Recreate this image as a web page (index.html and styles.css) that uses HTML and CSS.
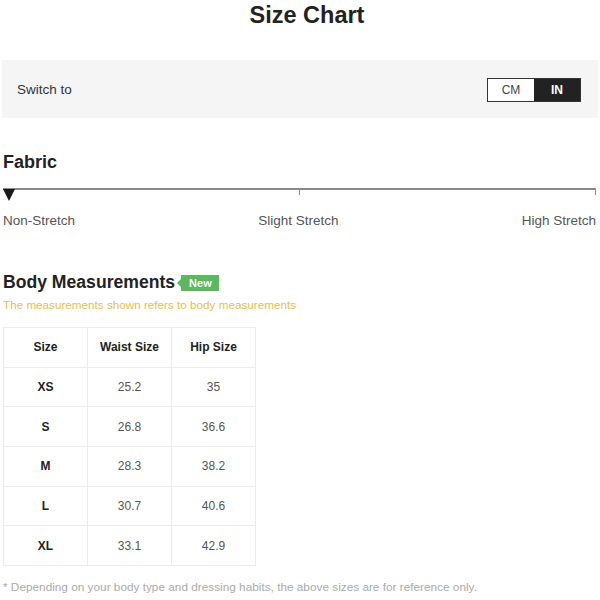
FILE: index.html
```html
<!DOCTYPE html>
<html>
<head>
<meta charset="utf-8">
<link rel="stylesheet" href="styles.css">
</head>
<body>
<div class="page">
  <h1 class="title">Size Chart</h1>
  <div class="switch-bar">
    <span class="switch-label">Switch to</span>
    <div class="toggle">
      <span class="opt">CM</span>
      <span class="opt active">IN</span>
    </div>
  </div>

  <h2 class="section-title fabric-title">Fabric</h2>
  <div class="slider">
    <div class="track">
      <span class="tick mid"></span>
      <span class="tick end"></span>
      <span class="marker"></span>
    </div>
    <div class="slider-labels">
      <span>Non-Stretch</span>
      <span>Slight Stretch</span>
      <span>High Stretch</span>
    </div>
  </div>

  <div class="body-head">
    <h2 class="section-title">Body Measurements</h2>
    <span class="badge">New</span>
  </div>
  <p class="note">The measurements shown refers to body measurements</p>

  <table class="chart">
    <thead>
      <tr><th>Size</th><th>Waist Size</th><th>Hip Size</th></tr>
    </thead>
    <tbody>
      <tr><th>XS</th><td>25.2</td><td>35</td></tr>
      <tr><th>S</th><td>26.8</td><td>36.6</td></tr>
      <tr><th>M</th><td>28.3</td><td>38.2</td></tr>
      <tr><th>L</th><td>30.7</td><td>40.6</td></tr>
      <tr><th>XL</th><td>33.1</td><td>42.9</td></tr>
    </tbody>
  </table>

  <p class="footnote">* Depending on your body type and dressing habits, the above sizes are for reference only.</p>
</div>
</body>
</html>
```

FILE: styles.css
```css
* { box-sizing: border-box; }
html, body { margin: 0; padding: 0; background: #fff; }
body {
  font-family: "Liberation Sans", Arial, sans-serif;
  color: #222;
}
.page {
  width: 600px;
  padding: 0 2px;
}
.title {
  margin: 0;
  padding: 1px 0 0 14px;
  font-size: 23.5px;
  line-height: 28px;
  font-weight: bold;
  text-align: center;
  color: #222;
}
.switch-bar {
  margin-top: 31px;
  height: 58px;
  background: #f5f5f5;
  display: flex;
  align-items: center;
  justify-content: space-between;
  padding: 1px 17px 0 15px;
}
.switch-label {
  font-size: 13.5px;
  color: #333;
}
.toggle {
  display: flex;
  border: 1px solid #333;
  height: 24px;
}
.opt {
  width: 46px;
  display: flex;
  align-items: center;
  justify-content: center;
  font-size: 12px;
  color: #444;
  background: #fff;
}
.opt.active {
  background: #222;
  color: #fff;
  font-weight: bold;
}
.section-title {
  margin: 0;
  font-size: 18px;
  line-height: 22px;
  font-weight: bold;
  color: #222;
}
.fabric-title {
  margin-top: 33px;
  padding-left: 1px;
}
.slider {
  margin-top: 15px;
  padding: 0 2px 0 1px;
}
.track {
  position: relative;
  height: 2px;
  background: #8a8a8a;
}
.tick {
  position: absolute;
  top: 0;
  width: 1px;
  height: 7px;
  background: #8a8a8a;
}
.tick.mid { left: 296px; }
.tick.end { right: 0; }
.marker {
  position: absolute;
  left: 0;
  top: 1px;
  width: 0;
  height: 0;
  border-left: 6px solid transparent;
  border-right: 6px solid transparent;
  border-top: 12px solid #1a1a1a;
}
.slider-labels {
  margin-top: 23px;
  display: flex;
  justify-content: space-between;
  font-size: 13.5px;
  line-height: 16px;
  color: #555;
}
.body-head {
  margin-top: 42px;
  display: flex;
  align-items: center;
  padding-left: 1px;
}
.body-head .section-title { font-size: 17.6px; }
.badge {
  position: relative;
  margin-left: 6px;
  background: #5bb85d;
  color: #fff;
  font-size: 11px;
  font-weight: bold;
  line-height: 16px;
  height: 16px;
  padding: 0 7px 0 8px;
  margin-top: 2px;
}
.badge::before {
  content: "";
  position: absolute;
  left: -4px;
  top: 4px;
  border-top: 4px solid transparent;
  border-bottom: 4px solid transparent;
  border-right: 4px solid #5bb85d;
}
.note {
  margin: 4px 0 0;
  padding-left: 1px;
  font-size: 11.7px;
  line-height: 16px;
  color: #e5c04a;
}
.chart {
  margin-top: 14px;
  margin-left: 1px;
  border-collapse: collapse;
  font-size: 12px;
}
.chart th, .chart td {
  width: 84px;
  height: 39.7px;
  border: 1px solid #ececec;
  text-align: center;
  padding: 0;
}
.chart th { font-weight: bold; color: #222; }
.chart td { color: #555; }
.footnote {
  margin: 13px 0 0;
  padding-left: 1px;
  font-size: 11.8px;
  line-height: 16px;
  color: #aaa;
}
```
